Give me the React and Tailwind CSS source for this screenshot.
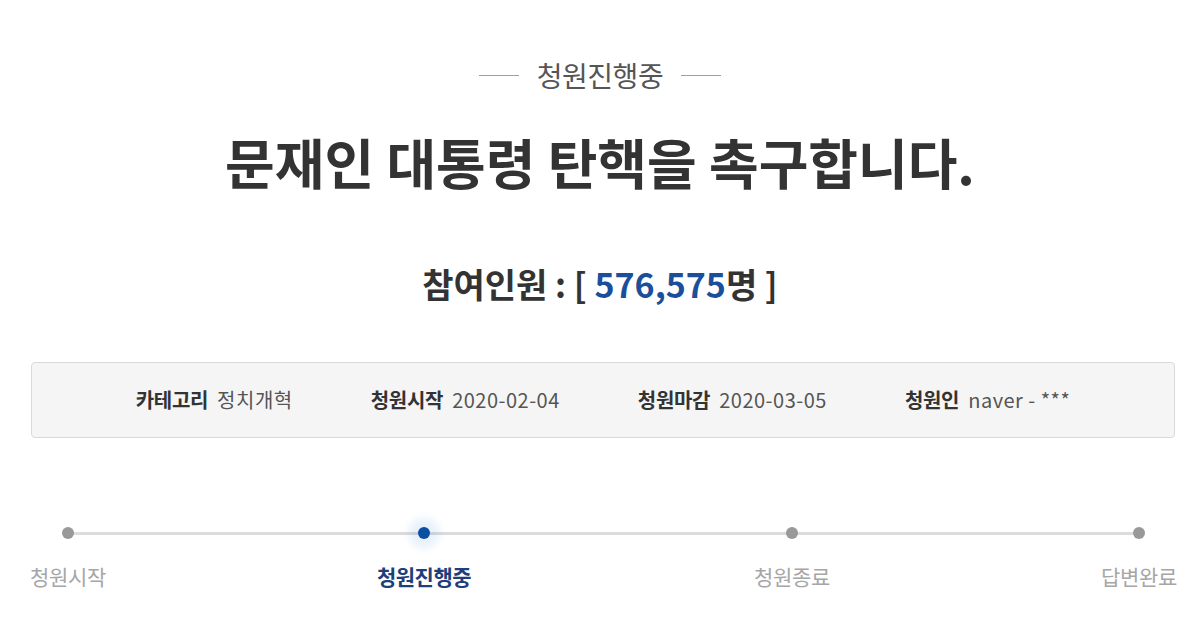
import React from "react";

const info = [
  { label: "카테고리", value: "정치개혁" },
  { label: "청원시작", value: "2020-02-04" },
  { label: "청원마감", value: "2020-03-05" },
  { label: "청원인", value: "naver - ***" },
];

const steps = [
  { name: "청원시작", active: false },
  { name: "청원진행중", active: true },
  { name: "청원종료", active: false },
  { name: "답변완료", active: false },
];

function StepBar() {
  return (
    <div className="relative ml-[30px] mr-[23px] mt-[89px] flex justify-between">
      {/* connecting line */}
      <div className="absolute left-[38px] right-[38px] top-[5px] h-[3px] bg-[#dcdcdc]" />
      {steps.map((s) => (
        <div key={s.name} className={s.active ? "relative mr-[12px] flex flex-col items-center" : "relative flex flex-col items-center"}>
          {s.active ? (
            <div className="h-[12px] w-[12px] rounded-full bg-[#0b4ea2] shadow-[0_0_8px_9px_rgba(60,130,220,0.12)]" />
          ) : (
            <div className="h-[12px] w-[12px] rounded-full bg-[#999999]" />
          )}
          <span
            className={
              s.active
                ? "mt-[24px] text-[21px] leading-[26px] font-bold text-[#1d3f7c] tracking-[-0.5px]"
                : "mt-[24px] text-[21px] leading-[26px] text-[#a6a6a6] tracking-[-0.3px]"
            }
          >
            {s.name}
          </span>
        </div>
      ))}
    </div>
  );
}

export default function App() {
  return (
    <div className="w-[1200px] h-[630px] overflow-hidden bg-white pt-[59px] font-['Noto_Sans_CJK_KR','Noto_Sans',sans-serif]">
      <div className="flex items-center justify-center gap-[18px]">
        <div className="h-px w-[40px] bg-[#a0a0a0]" />
        <span className="text-[28px] leading-[32px] text-[#555555] tracking-[-0.5px]">청원진행중</span>
        <div className="h-px w-[40px] bg-[#a0a0a0]" />
      </div>

      <h1 className="mt-[40px] text-center text-[54px] leading-[62px] font-bold text-[#333333]">
        문재인 대통령 탄핵을 촉구합니다.
      </h1>

      <p className="mt-[69px] text-center text-[34px] leading-[44px] font-bold text-[#333333]">
        참여인원 : [ <span className="text-[#1b4f9c]">576,575</span>명 ]
      </p>

      <div className="ml-[31px] mr-[25px] mt-[56px] flex h-[76px] items-center justify-center gap-[78px] rounded-[4px] border border-[#d9d9d9] bg-[#f5f5f5]">
        {info.map((i) => (
          <div key={i.label} className="flex items-center gap-[9px] text-[20px]">
            <span className="font-bold text-[#333333] tracking-[-0.3px]">{i.label}</span>
            <span className="text-[#555555] tracking-[0.5px]">{i.value}</span>
          </div>
        ))}
      </div>

      <StepBar />
    </div>
  );
}
